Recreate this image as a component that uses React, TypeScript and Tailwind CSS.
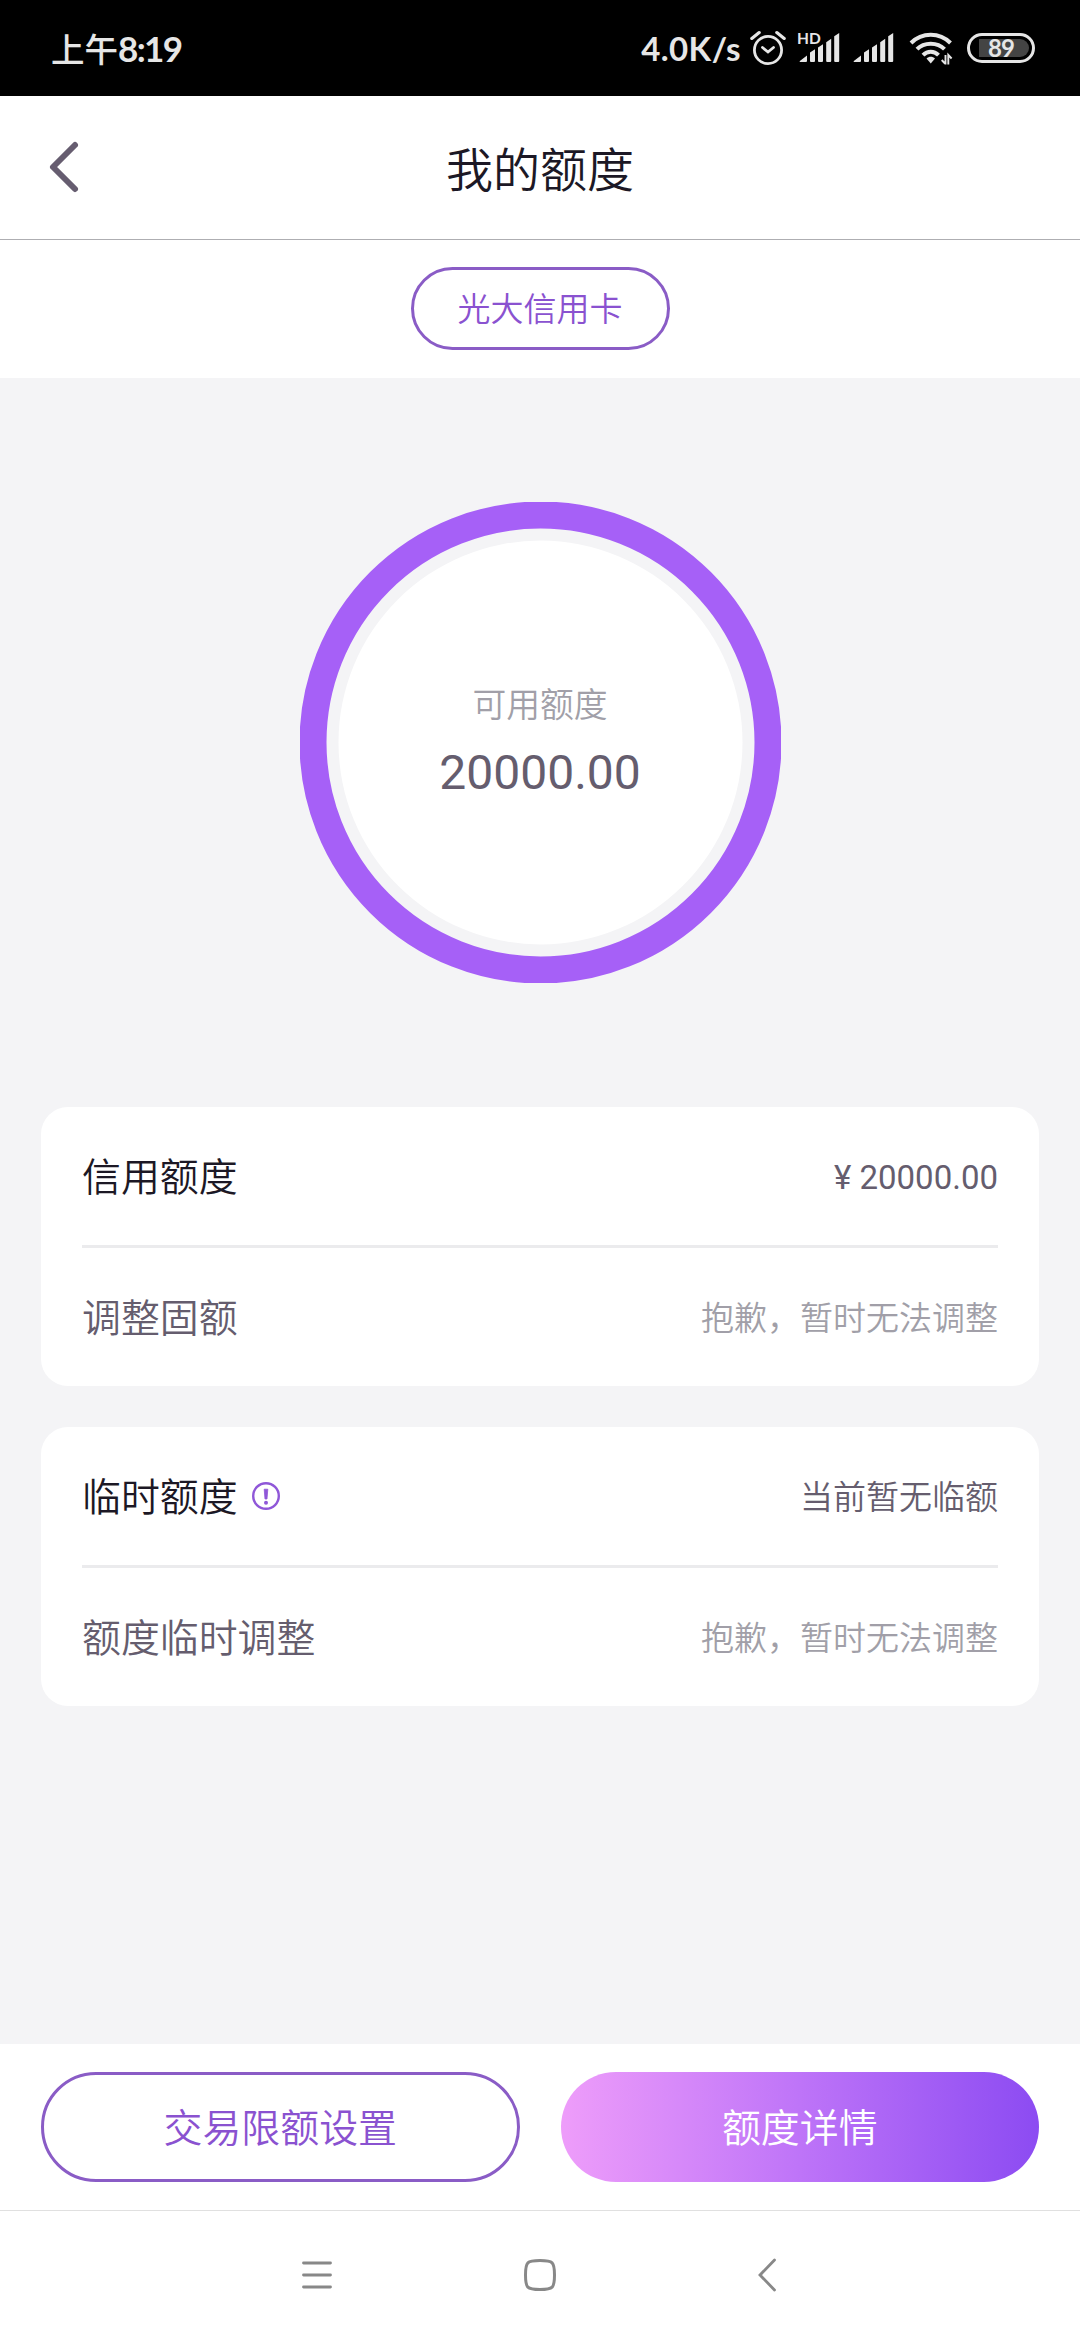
import type { ReactNode } from "react";
import clsx from "clsx";

function AlarmIcon() {
  return (
    <svg className="ml-[9px] w-[36px] h-[36px]" viewBox="0 0 36 36" fill="none" stroke="#e6e6e6" strokeLinecap="round">
      <circle cx="18" cy="20" r="13.6" strokeWidth="2.8" />
      <path d="M12.5 17.5l5.5 4.5 5.5-4.5" strokeWidth="2.8" />
      <path d="M1.8 8.4l7.4-5.8M34.2 8.4l-7.4-5.8" strokeWidth="3.2" />
    </svg>
  );
}

function SignalBars() {
  return (
    <svg className="w-[41px] h-[30px]" viewBox="0 0 41 30" fill="#e6e6e6">
      <path d="M0.5 28.3L8 22.5V28a1 1 0 0 1-1 1H1zM11 19.5l5-3.2V28a1 1 0 0 1-1 1h-3a1 1 0 0 1-1-1zM19 14.4l5-3.2V28a1 1 0 0 1-1 1h-3a1 1 0 0 1-1-1zM27.2 9.2l5-3.5V28a1 1 0 0 1-1 1h-3a1 1 0 0 1-1-1zM35.2 3.2l5-3.2V28a1 1 0 0 1-1 1h-3a1 1 0 0 1-1-1z" />
    </svg>
  );
}

function WifiIcon() {
  return (
    <svg className="ml-[15px] w-[44px] h-[36px]" viewBox="0 0 44 36" fill="none" stroke="#e6e6e6" strokeWidth="4">
      <path d="M2 13C13 2 30.5 2 41.5 13" />
      <path d="M8 19.2C15 11.9 28.5 11.9 35.5 19.2" />
      <path d="M14 25.2C18.5 20.6 25 20.6 29.5 25.2" />
      <path d="M17.5 28.6c2.4-2.4 6.1-2.4 8.5 0L21.75 33.5z" fill="#e6e6e6" stroke="none" />
      <path d="M36.5 25V34.5M32.7 30l3.3 3.5M39.3 34.5V25l3.3 3.5" strokeWidth="1.9" />
    </svg>
  );
}

function StatusBar() {
  return (
    <div className="flex items-center h-24 bg-black pl-[51px] pr-[45px] text-[#e6e6e6] shrink-0">
      <div className="flex items-center leading-none">
        <span className="font-['Noto_Sans_CJK_SC',sans-serif] text-[33.5px] font-medium">上午</span>
        <span className="font-['Lato',sans-serif] text-[35px] font-bold tracking-[-1.6px]">8:19</span>
      </div>
      <div className="flex items-center ml-auto">
        <span className="font-['Lato',sans-serif] text-[33px] leading-none font-bold tracking-[0.4px]">4.0K/s</span>
        <AlarmIcon />
        <div className="relative ml-[13px] flex">
          <SignalBars />
          <span className="absolute left-[-2px] top-[-2px] font-['Lato',sans-serif] text-[15.5px] leading-[15px] font-bold">
            HD
          </span>
        </div>
        <div className="ml-[13px] flex">
          <SignalBars />
        </div>
        <WifiIcon />
        <div className="ml-[14px] w-[68px] h-[30px] rounded-full border-3 border-[#e6e6e6] p-[3px] pl-[9px]">
          <div className="flex items-center justify-center h-full rounded-r-full rounded-l-[3px] bg-[#444] pr-[6px] font-['Lato',sans-serif] text-[24px] leading-none font-bold tracking-[-1px]">
            89
          </div>
        </div>
      </div>
    </div>
  );
}

function Header() {
  return (
    <div className="flex items-center h-36 px-[48px] border-b border-[#aeaeb2] shrink-0">
      <svg className="mb-[2px] w-[34px] h-[54px]" viewBox="0 0 34 54" fill="none" stroke="#665d70" strokeWidth="6" strokeLinecap="round" strokeLinejoin="round">
        <path d="M27 5L5 27l22 22" />
      </svg>
      <h1 className="flex-1 pt-[5px] pr-[34px] text-center text-[47px] leading-none text-[#1c1825]">我的额度</h1>
    </div>
  );
}

function QuotaRing() {
  return (
    <div className="grid place-items-center">
      <svg className="col-start-1 row-start-1 w-[481px] h-[481px]" viewBox="0 0 481 481">
        <circle cx="240.5" cy="240.5" r="227.5" fill="none" stroke="#a660f7" strokeWidth="27" />
        <circle cx="240.5" cy="240.5" r="202" fill="#fff" />
      </svg>
      <div className="col-start-1 row-start-1 flex flex-col items-center">
        <span className="text-[33.8px] leading-[48px] text-[#a19fa8]">可用额度</span>
        <span className="mt-[13px] text-[48px] leading-[60px] font-normal text-[#655d6e]">20000.00</span>
      </div>
    </div>
  );
}

interface RowProps {
  label: string;
  value: string;
  muted?: boolean;
  icon?: ReactNode;
}

function Row({ label, value, muted, icon }: RowProps) {
  return (
    <div className={clsx("flex items-center justify-between pt-[3px]", muted ? "h-[138px]" : "h-[141px]")}>
      <div className="flex items-center gap-[13px]">
        <span className={clsx("pt-[2px] text-[38.9px]", muted ? "text-[#655d6e]" : "text-[#1c1825]")}>{label}</span>
        {icon}
      </div>
      <span
        className={clsx(
          "text-[33px]",
          muted ? "text-[#a19fa8]" : "text-[#655d6e]",
          value.startsWith("¥") && "font-normal"
        )}
      >
        {value}
      </span>
    </div>
  );
}

function Card({ children }: { children: ReactNode }) {
  return <div className="h-[279px] px-[41px] rounded-[27px] bg-white divide-y-3 divide-[#ebebed]">{children}</div>;
}

function InfoIcon() {
  return (
    <svg className="mb-[3px] w-[30px] h-[30px]" viewBox="0 0 30 30" fill="none" stroke="#8f57d8">
      <circle cx="15" cy="15" r="12.8" strokeWidth="2.4" />
      <path d="M13.2 8.2h3.6l-.8 9.8h-2z" fill="#8f57d8" strokeWidth="0.8" strokeLinejoin="round" />
      <circle cx="15" cy="21.8" r="2" fill="#8f57d8" stroke="none" />
    </svg>
  );
}

function NavBar() {
  return (
    <div className="flex items-center justify-center h-[130px] border-t border-[#e0e0e0] shrink-0">
      <div className="flex items-center justify-between w-[480px] pb-[2px]">
        <svg className="w-[34px] h-[34px]" viewBox="0 0 34 34" stroke="#888" strokeWidth="2.8" strokeLinecap="round">
          <path d="M3.5 5h27M3.5 17h27M3.5 29h27" />
        </svg>
        <svg className="w-[34px] h-[34px]" viewBox="0 0 34 34" fill="none" stroke="#888" strokeWidth="3">
          <path d="M17 2.5c13 0 14.5 1.5 14.5 14.5S30 31.5 17 31.5 2.5 30 2.5 17 4 2.5 17 2.5z" />
        </svg>
        <svg className="w-[34px] h-[34px]" viewBox="0 0 34 34" fill="none" stroke="#888" strokeWidth="2.8" strokeLinecap="round">
          <path d="M28.5 2L14 17l14.500 15" />
        </svg>
      </div>
    </div>
  );
}

export default function App() {
  return (
    <div className="flex flex-col w-[1080px] h-[2340px] bg-white font-['Roboto','Noto_Sans_CJK_SC',sans-serif] font-[350]">
      <StatusBar />
      <Header />

      {/* Card selector */}
      <div className="flex items-start justify-center h-[138px] pt-[27px] shrink-0">
        <button className="w-[259px] h-[83px] pt-[2px] rounded-full border-3 border-[#8a5cc6] text-[33px] text-[#8a52d0]">
          光大信用卡
        </button>
      </div>

      {/* Content */}
      <div className="flex-1 bg-[#f4f4f6] px-[41px] pt-[124px]">
        <QuotaRing />
        <div className="flex flex-col gap-[41px] mt-[124px]">
          <Card>
            <Row label="信用额度" value="¥ 20000.00" />
            <Row label="调整固额" value="抱歉，暂时无法调整" muted />
          </Card>
          <Card>
            <Row label="临时额度" value="当前暂无临额" icon={<InfoIcon />} />
            <Row label="额度临时调整" value="抱歉，暂时无法调整" muted />
          </Card>
        </div>
      </div>

      {/* Actions */}
      <div className="grid grid-cols-2 items-center gap-[41px] h-[166px] px-[41px] shrink-0">
        <button className="h-[110px] pt-[4px] rounded-full border-3 border-[#8a5cc6] text-[38.9px] text-[#8a52d0]">
          交易限额设置
        </button>
        <button className="h-[110px] pt-[4px] rounded-full bg-linear-to-r/srgb from-[#ee9dfa] via-[#be74f8] to-[#8c4bf2] text-[38.9px] text-white">
          额度详情
        </button>
      </div>

      <NavBar />
    </div>
  );
}
